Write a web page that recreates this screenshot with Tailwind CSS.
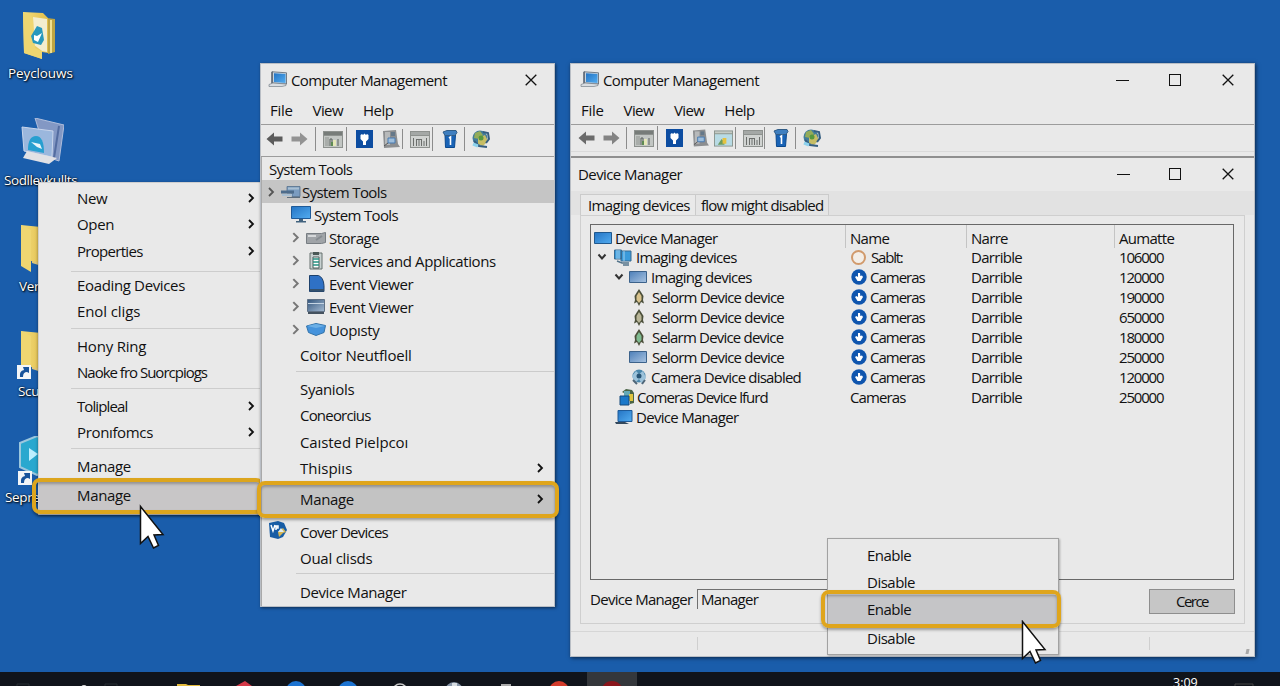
<!DOCTYPE html>
<html lang="en">
<head>
<meta charset="utf-8">
<title>Computer Management</title>
<script src="https://cdn.jsdelivr.net/npm/@tailwindcss/browser@4"></script>
</head>
<body class="relative h-[686px] w-[1280px] overflow-hidden bg-[#1a5dab] font-['Open_Sans','Noto_Sans',sans-serif] text-[15px] leading-5 tracking-[-0.35px] whitespace-nowrap text-[#111]">
<svg class="absolute size-0">
  <defs>
    <linearGradient id="blue" x1="0" y1="0" x2="1" y2="1"><stop offset="0" stop-color="#2474c4"/><stop offset="1" stop-color="#52acf0"/></linearGradient>
    <linearGradient id="steel" x1="0" y1="0" x2="1" y2="1"><stop offset="0" stop-color="#4c7fb9"/><stop offset="1" stop-color="#a9c3e0"/></linearGradient>
    <linearGradient id="slate" x1="0" y1="0" x2="1" y2="1"><stop offset="0" stop-color="#33557c"/><stop offset="1" stop-color="#a4bad2"/></linearGradient>
    <linearGradient id="gold" x1="0" y1="0" x2="1" y2="0"><stop offset="0" stop-color="#f3dc7d"/><stop offset="1" stop-color="#e2bf4c"/></linearGradient>
  </defs>
  <symbol id="chev" viewBox="0 0 8 10"><path d="M2 1l4 4-4 4" fill="none" stroke="currentColor" stroke-width="1.8"/></symbol>
  <symbol id="down" viewBox="0 0 10 8"><path d="M1.500 1.500L5 5.500l3.500-4" fill="none" stroke="#333" stroke-width="2"/></symbol>
  <symbol id="close" viewBox="0 0 12 12"><path d="M.7.7l10.600 10.600M11.300.7L.7 11.300" stroke="#111" stroke-width="1.300"/></symbol>
  <symbol id="cm" viewBox="0 0 20 17"><path d="M3 1l2-1v12l-2 1z" fill="#777f8a"/><path d="M4.500.8l14 1V13l-14-1z" fill="#c8d4df" stroke="#59636f" stroke-width=".8"/><path d="M6 2.300l11.500.8V12L6 11z" fill="url(#blue)"/><path d="M1 13.500l4-1.500 13 1v1.500l-4 1H1z" fill="#d9dde1" stroke="#7a828b" stroke-width=".7"/></symbol>
  <symbol id="arrow" viewBox="0 0 17 14"><path d="M.5 7L8 .5v4h8.500v5H8v4z" fill="currentColor"/></symbol>
  <symbol id="pane" viewBox="0 0 20 17"><path fill="#8d918e" d="M0 0h20v17H0z"/><path fill="#c2c6c3" d="M1 5h18v11H1z"/><path fill="#777c79" d="M1 1h18v3H1z"/><path fill="#a9adaa" d="M2 6h4v9H2z"/><path d="M7 15V8h2v7M15 15V8" stroke="#59605c" fill="none"/><path fill="#e5e7b8" d="M10 9h3v6h-3z"/><path fill="#5e8a54" d="M8 11h2v4H8z"/></symbol>
  <symbol id="barcode" viewBox="0 0 20 17"><path fill="#8d918e" d="M0 0h20v17H0z"/><path fill="#d0d3d1" d="M1 5h18v11H1z"/><path fill="#a4a8a6" d="M1 1h18v3H1z"/><path d="M3.500 7v8M6.500 15V9M9 9v6M11.500 8v7M14 10v5M16.500 7v8M6 8.500h6" stroke="#6b6e6c" fill="none"/></symbol>
  <symbol id="pic" viewBox="0 0 20 17"><path fill="#8b958f" d="M0 0h20v17H0z"/><path fill="#b8dbe4" d="M1 4h18v12H1z"/><path fill="#c5cbc4" d="M1 1h18v2H1z"/><path fill="#6c9b5e" d="M4 15l4-6 3 3v3z"/><path fill="#e6c23f" d="M9 8h4v6H9z"/></symbol>
  <symbol id="helpb" viewBox="0 0 17 18"><path fill="#0d4da1" d="M0 0h17v18H0z"/><path d="M4.500 5l1.500-1 1 1 1.500-1.500L10 5l1-1 1.500 1v4L10 11.500V15H7v-3.500L4.500 9z" fill="#fff"/></symbol>
  <symbol id="tower" viewBox="0 0 18 18"><path fill="#8c8e90" d="M1 1l13-1 2 14 2 3-16 1z"/><path fill="#b7b9ba" d="M3 2h5v13H3z"/><path fill="#657889" d="M9 2h4v4H9z"/><path fill="#9ebedc" stroke="#487ab0" d="M6 8h7v5H6z"/><path d="M2 16l4-3" stroke="#555"/></symbol>
  <symbol id="trash" viewBox="0 0 16 18"><path fill="#1963b6" stroke="#0b498e" d="M3 5h10.500l-1 12.500h-9z"/><path fill="#3f7fc0" stroke="#315d87" d="M1 2l4-1.500h9l1 2-2 3H3z"/><path d="M7 8l1.500-1v8" stroke="#fff" stroke-width="1.600" fill="none"/></symbol>
  <symbol id="globe" viewBox="0 0 18 18"><circle cx="8" cy="8" r="7.500" fill="#427d9b"/><path d="M3 3l5-2 3 4-4 4-5-1z" fill="#94ac59"/><path d="M6 8l7-3 3 6-5 5-5-2z" fill="#c6bd65"/><path d="M11 2l5 1 1 6-3 4M2 11l5 5 8 1" fill="none" stroke="#345d80" stroke-width="2"/><circle cx="9" cy="8" r="2.500" fill="#56983e"/><path d="M1 14l5 2" stroke="#8dd2ed" stroke-width="3"/></symbol>
  <symbol id="drives" viewBox="0 0 20 14"><path d="M6 1.500h13v10H11V8H6z" fill="#7b9cc0" stroke="#56708b" stroke-width=".8"/><path d="M0 5.500h13v3H0z" fill="#4d6c8c"/><path d="M1 9h10v2H1zM7 2.500h11v2H7z" fill="#a9bfd2"/><path d="M6 12h13v1H6z" fill="#5d6c7b"/></symbol>
  <symbol id="monitor" viewBox="0 0 20 17"><path d="M.5.5h19v12H.5z" fill="url(#blue)" stroke="#1e5a98"/><path d="M8 13h4v2h3v1.500H5V15h3z" fill="#41627e"/></symbol>
  <symbol id="storage" viewBox="0 0 20 12"><path d="M.5 1.500h15l4-1v10l-4 1H.5z" fill="#a0a4a8" stroke="#777d82"/><path d="M2 3h8v2H2z" fill="#d5d8da"/><path d="M10 8l6-4" stroke="#858b90" stroke-width="2"/></symbol>
  <symbol id="services" viewBox="0 0 14 18"><path d="M1 1h12v16H1z" fill="#c8d1d1" stroke="#66706f"/><path d="M4 0h6v3H4z" fill="#4a5856"/><path d="M4 5h6v11H4z" fill="#fff" stroke="#4c5d5a"/><path d="M4 7h6M4 10h6M4 13h6" stroke="#269181" stroke-width="1.500"/></symbol>
  <symbol id="event" viewBox="0 0 16 17"><path d="M.5.5h9q5 2 5.500 10v6H.5z" fill="#2f71c5" stroke="#1e416c"/><path d="M1 14h14v2.500H1z" fill="#34516d"/></symbol>
  <symbol id="event2" viewBox="0 0 18 16"><path d="M.5.5h17v12H.5z" fill="url(#slate)" stroke="#617286"/><path d="M1 4h16v1H1z" fill="#c6d5e4"/><path d="M1 13h16v2H1z" fill="#44515e"/></symbol>
  <symbol id="gem" viewBox="0 0 20 13"><path d="M.5 3L10 .5l9.500 2-1.500 7-8 3-7.500-3z" fill="#4593dc" stroke="#3373a9"/><path d="M1 3l9-2 9 2-9 2z" fill="#6bafe6"/></symbol>
  <symbol id="screen" viewBox="0 0 18 12"><path d="M.5.5h17v11H.5z" fill="url(#blue)" stroke="#20588d"/></symbol>
  <symbol id="screen2" viewBox="0 0 18 12"><path d="M.5.5h17v11H.5z" fill="url(#steel)" stroke="#3c628b"/></symbol>
  <symbol id="imaging" viewBox="0 0 18 17"><path d="M.5 1h7v9h-7zM7 2h10v10H7z" fill="#3a9ada" stroke="#396a91"/><path d="M3 1v9M5 1v9M10 2v10" stroke="#9fd0ef"/><path d="M3 12l5 2h7M9 16h6" stroke="#54748b" stroke-width="1.500" fill="none"/></symbol>
  <symbol id="bug" viewBox="0 0 12 17"><path d="M6 0l2 3 2.500 4-.5 4 1 3.500-3-1.500-2 4-2-4-3 1.500L2 11l-.5-4L4 3z" fill="#4b4f3a"/><path d="M6 3l2.500 4v4L6 14l-2.500-3V7z" fill="currentColor"/></symbol>
  <symbol id="cam" viewBox="0 0 16 16"><circle cx="8" cy="7" r="6.500" fill="#4b87ab"/><path d="M1 7l4-5 3 3 4-3 3 7-4 6-3-5-4 4z" fill="#9cc2da"/><circle cx="8" cy="7" r="2.500" fill="#285475"/><path d="M2 11l4 4M14 11l-3 4" stroke="#4f6678" stroke-width="2"/></symbol>
  <symbol id="cams" viewBox="0 0 15 17"><path d="M3 3l4-3 6 1 2 3v10l-4 1V7z" fill="#4a6446"/><path d="M5 2h6v5H5z" fill="#65a9b6"/><path d="M10 5h4v7h-4z" fill="#dfc43e"/><path d="M1 7h9v9H1z" fill="#1b78c9" stroke="#174a7d"/></symbol>
  <symbol id="laptop" viewBox="0 0 18 15"><path d="M3 .5h14v11H3z" fill="url(#blue)" stroke="#1e5a98"/><path d="M0 12h10l4 2H1z" fill="#33485c"/></symbol>
  <symbol id="dl" viewBox="0 0 16 16"><circle cx="8" cy="8" r="7.700" fill="#0f55ae"/><path d="M7 4h2l.3 3L11 6.500 12 8l-2.500 4h-3L4 8l1.500-1L7 8z" fill="#fff"/></symbol>
  <symbol id="cursor" viewBox="0 0 26 44"><path d="M1.500 1.500v37l7.500-7 5.500 11.500 5-2.500-4.500-10.500 9-.5z" fill="#fff" stroke="#111" stroke-width="1.500"/></symbol>
  <symbol id="shortcut" viewBox="0 0 14 14"><path fill="#f3f5f7" d="M0 0h14v14H0z"/><path d="M3 12q-1-6 4-7l-1-3h6v6l-2-1q-4 0-4 5z" fill="#17539b"/></symbol>
  <symbol id="folder" viewBox="0 0 34 48"><path d="M12 5l22 2v33l-9 3-13-4z" fill="#e0c678"/><path d="M1 1l20 2 4 4v32l-14-2z" fill="url(#gold)"/><path d="M1 1l10 5v42L1 42z" fill="#efd671"/></symbol>
</svg>

<!-- desktop icons -->
<svg class="absolute left-[23px] top-[12px] h-[48px] w-[34px]" viewBox="0 0 34 48"><path d="M24 6l8 1v33l-7 2z" fill="#bda443"/><path d="M28 8v33" stroke="#efdf91" stroke-width="2"/><path d="M0 0l20 1 5 5v35l-6-1v7L1 41z" fill="url(#gold)"/><path d="M10 5l14 2v33l-5-1-8-6z" fill="#f3edce"/><path d="M0 0l10 6 2 30 7 3v8L1 41z" fill="#eed671"/><path d="M14 14l5 2 2 12-3 5-8-2-2-7z" fill="#2898bd"/><path d="M11 23l3 1 5-3-4 9-4-2z" fill="#fff"/></svg>
<svg class="absolute left-[21px] top-[118px] h-[47px] w-[43px]" viewBox="0 0 43 47"><path d="M14 0l29 7-5 36-12-4z" fill="#8398c4" stroke="#b0bedc"/><path d="M38 8l-5 32" stroke="#536ca0" stroke-width="2"/><path d="M1 9l31 4-1 26-28-6z" fill="#9bb7dd" stroke="#c9d6ec"/><path d="M7 32q0-14 8-14t8 17z" fill="#279fd0"/><path d="M10 24l9 2 2 5-5-2z" fill="#e8f5fa"/><path d="M6 33l30 7-8 6-26-6z" fill="#e1e1e5"/></svg>
<p class="absolute left-[8px] top-[63px] text-[13.5px] tracking-[-0.1px] text-white [text-shadow:1px_1px_2px_#000,0_0_2px_#000]">Peyclouws</p>
<p class="absolute left-[4px] top-[170px] text-[13.5px] tracking-[-0.4px] text-white [text-shadow:1px_1px_2px_#000,0_0_2px_#000]">Sodlleykullts</p>
<svg class="absolute left-[20px] top-[223px] h-[50px] w-[34px]"><use href="#folder"/></svg>
<p class="absolute left-[19px] top-[276px] text-[13.5px] text-white [text-shadow:1px_1px_2px_#000,0_0_2px_#000]">Verp</p>
<svg class="absolute left-[20px] top-[329px] h-[50px] w-[34px]"><use href="#folder"/></svg>
<svg class="absolute left-[17px] top-[365px] size-[14px]"><use href="#shortcut"/></svg>
<p class="absolute left-[18px] top-[381px] text-[13.5px] text-white [text-shadow:1px_1px_2px_#000,0_0_2px_#000]">Scup</p>
<svg class="absolute left-[19px] top-[436px] h-[40px] w-[36px]" viewBox="0 0 36 40"><path d="M1 7L18 0l17 7v24l-17 8L1 31z" fill="#29a8cf" stroke="#9bc7dd" stroke-width="2"/><path d="M10 12l9 6-9 7z" fill="#bcefff"/></svg>
<svg class="absolute left-[18px] top-[471px] size-[14px]"><use href="#shortcut"/></svg>
<p class="absolute left-[5px] top-[487px] text-[13.5px] text-white [text-shadow:1px_1px_2px_#000,0_0_2px_#000]">Sepre</p>

<!-- desktop context menu -->
<nav class="absolute left-[38px] top-[182px] flex h-[333px] w-[223px] flex-col border-t border-l border-[#cfcfcf] bg-[#e9e9e9] pt-[2px] shadow-[0_1px_3px_#0006]">
  <div class="flex h-[26px] items-center justify-between pr-[6px] pl-[38px]">New<svg class="h-[10px] w-[8px]"><use href="#chev"/></svg></div>
  <div class="flex h-[26px] items-center justify-between pr-[6px] pl-[38px]">Open<svg class="h-[10px] w-[8px]"><use href="#chev"/></svg></div>
  <div class="flex h-[27px] items-center justify-between pr-[6px] pl-[38px] tracking-[-0.7px]">Properties<svg class="h-[10px] w-[8px]"><use href="#chev"/></svg></div>
  <hr class="mt-[7px] ml-[32px] border-[#cdcdcd]">
  <div class="flex h-[26px] items-center pl-[38px]">Eoading Devices</div>
  <div class="flex h-[26px] items-center pl-[38px] tracking-[-0.1px]">Enol cligs</div>
  <hr class="mt-[4px] mb-[4px] ml-[32px] border-[#cdcdcd]">
  <div class="flex h-[26px] items-center pl-[38px] tracking-[-0.2px]">Hony Ring</div>
  <div class="flex h-[26px] items-center pl-[38px] tracking-[-1px]">Naoke fro Suorcpiogs</div>
  <hr class="mt-[3px] mb-[4px] ml-[32px] border-[#cdcdcd]">
  <div class="flex h-[26px] items-center justify-between pr-[6px] pl-[38px] tracking-[-0.9px]">Tolipleal<svg class="h-[10px] w-[8px]"><use href="#chev"/></svg></div>
  <div class="flex h-[26px] items-center justify-between pr-[6px] pl-[38px]">Pronıfomcs<svg class="h-[10px] w-[8px]"><use href="#chev"/></svg></div>
  <hr class="mt-[3px] mb-[4px] ml-[32px] border-[#cdcdcd]">
  <div class="flex h-[26px] items-center pl-[38px]">Manage</div>
  <div class="relative flex h-[34px] items-center bg-[#c8c6c7] pb-[2px] pl-[38px]">Manage
    <span class="absolute -top-px right-[-3px] bottom-[-1px] left-[-7px] rounded-[8px] border-4 border-[#dca51e] shadow-[0_2px_3px_#0006,inset_0_2px_3px_#0004]"></span>
  </div>
</nav>

<!-- narrow management window -->
<section class="absolute left-[260px] top-[63px] flex h-[544px] w-[295px] flex-col border border-[#b9bec5] bg-[#e9e9e9] shadow-[1px_1px_3px_#0008]">
  <header class="flex h-[32px] items-center pr-[17px] pl-[7px]"><svg class="mb-[2px] h-[17px] w-[20px]"><use href="#cm"/></svg><h1 class="ml-[3px] tracking-[-0.6px]">Computer Management</h1><svg class="ml-auto size-[12px]"><use href="#close"/></svg></header>
  <div class="flex h-[29px] items-center gap-[20px] border-b border-[#9c9c9c] pl-[9px]"><span class="tracking-[-0.3px]">File</span><span class="tracking-[-0.6px]">View</span><span class="tracking-[-0.5px]">Help</span></div>
  <div class="flex h-[32px] items-start border-b border-[#9c9c9c] pt-[2px]">
    <div class="flex h-[24px] items-center"><svg class="ml-[5px] h-[14px] w-[17px] text-[#5b5b5b]"><use href="#arrow"/></svg><svg class="ml-[8px] h-[14px] w-[17px] -scale-x-100 text-[#939393]"><use href="#arrow"/></svg>
    <i class="ml-[7px] h-[24px] w-px bg-[#8c8c8c]"></i><svg class="ml-[7px] h-[17px] w-[20px]"><use href="#pane"/></svg><i class="ml-[3px] h-[24px] w-px bg-[#8c8c8c]"></i>
    <svg class="ml-[9px] h-[18px] w-[17px]"><use href="#helpb"/></svg><svg class="ml-[9px] h-[18px] w-[18px]"><use href="#tower"/></svg><i class="ml-[2px] h-[20px] w-px bg-[#8c8c8c]"></i><svg class="ml-[7px] h-[17px] w-[20px]"><use href="#barcode"/></svg><i class="ml-[2px] h-[24px] w-px bg-[#8c8c8c]"></i><svg class="ml-[9px] h-[18px] w-[16px]"><use href="#trash"/></svg><i class="ml-[6px] h-[24px] w-px bg-[#8c8c8c]"></i><svg class="ml-[7px] h-[18px] w-[18px]"><use href="#globe"/></svg></div>
  </div>
  <div class="flex flex-1 flex-col border-l border-[#a9a9a9] tracking-[-0.5px]">
    <div class="flex h-[23px] items-center pl-[7px] tracking-[-0.7px]">System Tools</div>
    <div class="flex h-[23px] items-center bg-[#c5c5c5] pl-[5px]"><svg class="h-[10px] w-[8px] text-[#555]"><use href="#chev"/></svg><svg class="ml-[6px] h-[14px] w-[20px]"><use href="#drives"/></svg><span class="ml-px tracking-[-0.6px]">System Tools</span></div>
    <div class="flex h-[23px] items-center pl-[29px]"><svg class="h-[17px] w-[20px]"><use href="#monitor"/></svg><span class="ml-[3px] tracking-[-0.65px]">System Tools</span></div>
    <div class="flex h-[23px] items-center pl-[29px]"><svg class="h-[11px] w-[9px] text-[#777]"><use href="#chev"/></svg><svg class="ml-[6px] h-[12px] w-[20px]"><use href="#storage"/></svg><span class="ml-[3px]">Storage</span></div>
    <div class="flex h-[23px] items-center pl-[29px]"><svg class="h-[11px] w-[9px] text-[#777]"><use href="#chev"/></svg><svg class="ml-[9px] h-[18px] w-[14px]"><use href="#services"/></svg><span class="ml-[6px] tracking-[-0.4px]">Services and Applications</span></div>
    <div class="flex h-[23px] items-center pl-[29px]"><svg class="h-[11px] w-[9px] text-[#777]"><use href="#chev"/></svg><svg class="ml-[9px] h-[17px] w-[16px]"><use href="#event"/></svg><span class="ml-[4px]">Event Viewer</span></div>
    <div class="flex h-[23px] items-center pl-[29px]"><svg class="h-[11px] w-[9px] text-[#777]"><use href="#chev"/></svg><svg class="ml-[7px] h-[16px] w-[18px]"><use href="#event2"/></svg><span class="ml-[4px]">Event Viewer</span></div>
    <div class="flex h-[23px] items-center pl-[29px]"><svg class="h-[11px] w-[9px] text-[#777]"><use href="#chev"/></svg><svg class="ml-[6px] h-[13px] w-[20px]"><use href="#gem"/></svg><span class="ml-[3px] tracking-[-0.35px]">Uopısty</span></div>
    <div class="flex h-[27px] items-center pl-[38px] tracking-[-0.18px]">Coitor Neutfloell</div>
    <hr class="mt-[3px] mb-[4px] ml-[34px] border-[#cbcbcb]">
    <div class="flex h-[26px] items-center pl-[38px] tracking-[-0.35px]">Syaniols</div>
    <div class="flex h-[26px] items-center pl-[38px] tracking-[-0.8px]">Coneorcius</div>
    <div class="flex h-[27px] items-center pl-[38px] tracking-[-0.1px]">Caısted Pielpcoı</div>
    <div class="flex h-[26px] items-center justify-between pr-[10px] pl-[38px] tracking-[0px]">Thispiıs<svg class="h-[10px] w-[8px]"><use href="#chev"/></svg></div>
    <div class="relative mt-[2px] flex h-[33px] items-center justify-between bg-[#c3c3c3] pr-[10px] pb-[2px] pl-[38px] tracking-[-0.35px]">Manage<svg class="h-[10px] w-[8px]"><use href="#chev"/></svg>
      <span class="absolute -top-[2px] right-[-5px] bottom-[-2px] left-[-5px] rounded-[8px] border-4 border-[#dfa51c] shadow-[0_2px_3px_#0005,inset_0_2px_3px_#0004]"></span></div>
    <div class="mt-[2px] flex h-[28px] items-center pl-[7px]"><svg class="mb-[4px] h-[18px] w-[18px]" viewBox="0 0 18 18"><path d="M0 2l9-2 6 2 3 7-4 7-5 2-8-2z" fill="#185da5"/><path d="M2 4l2 6 2-6M7 9V5h2v2H7" stroke="#fff" stroke-width="1.500" fill="none"/><path d="M9 11l5-4 3 4-3 1-4 4z" fill="#d7b653"/><path d="M9 11l3-4 3 4z" fill="#dcecf5"/></svg><span class="ml-[13px] tracking-[-0.75px]">Cover Devices</span></div>
    <div class="flex h-[24px] items-center pl-[38px] tracking-[-0.25px]">Oual clisds</div>
    <hr class="mt-[3px] mb-[5px] ml-[34px] border-[#cbcbcb]">
    <div class="flex h-[26px] items-center pl-[38px] tracking-[-0.4px]">Device Manager</div>
  </div>
</section>

<!-- wide management window -->
<section class="absolute left-[570px] top-[63px] flex h-[594px] w-[685px] flex-col border border-[#b9bec5] bg-[#e9e9e9] shadow-[1px_1px_4px_#0009]">
  <header class="flex h-[32px] items-center pr-[20px] pl-[9px]"><svg class="mb-[2px] h-[17px] w-[20px]"><use href="#cm"/></svg><h1 class="ml-[3px] tracking-[-0.6px]">Computer Management</h1><i class="ml-auto h-px w-[13px] bg-[#111]"></i><i class="ml-[40px] size-[12px] border border-[#111]"></i><svg class="ml-[41px] size-[12px]"><use href="#close"/></svg></header>
  <div class="flex h-[29px] items-center gap-[20px] border-b border-[#9c9c9c] pl-[10px]"><span class="tracking-[-0.3px]">File</span><span class="tracking-[-0.6px]">View</span><span class="tracking-[-0.6px]">View</span><span class="tracking-[-0.5px]">Help</span></div>
  <div class="flex h-[33px] items-start border-b-2 border-[#8f8f8f]">
    <div class="flex h-[27px] w-full items-center border-b border-[#dadada]"><svg class="ml-[7px] h-[14px] w-[17px] text-[#6b6b6b]"><use href="#arrow"/></svg><svg class="ml-[8px] h-[14px] w-[17px] -scale-x-100 text-[#838383]"><use href="#arrow"/></svg>
    <i class="ml-[6px] h-[22px] w-px bg-[#8c8c8c]"></i><svg class="ml-[7px] h-[17px] w-[20px]"><use href="#pane"/></svg><i class="ml-[3px] h-[24px] w-px bg-[#8c8c8c]"></i>
    <svg class="ml-[8px] h-[18px] w-[17px]"><use href="#helpb"/></svg><svg class="ml-[9px] h-[18px] w-[17px]"><use href="#tower"/></svg><svg class="ml-[5px] h-[17px] w-[19px]"><use href="#pic"/></svg><i class="ml-[2px] h-[22px] w-px bg-[#8c8c8c]"></i><svg class="ml-[7px] h-[17px] w-[20px]"><use href="#barcode"/></svg><i class="ml-px h-[22px] w-px bg-[#8c8c8c]"></i><svg class="ml-[8px] h-[18px] w-[16px]"><use href="#trash"/></svg><i class="ml-[6px] h-[22px] w-px bg-[#8c8c8c]"></i><svg class="ml-[7px] h-[18px] w-[18px]"><use href="#globe"/></svg></div>
  </div>
  <header class="flex h-[33px] items-center pr-[20px] pb-px pl-[7px]"><h2 class="tracking-[-0.58px]">Device Manager</h2><i class="ml-auto h-px w-[13px] bg-[#111]"></i><i class="ml-[39px] size-[12px] border border-[#111]"></i><svg class="ml-[41px] size-[12px]"><use href="#close"/></svg></header>
  <div class="flex h-[24px] items-end bg-[#e2e2e2] pl-[9px]"><div class="flex h-[21px] w-[115px] items-center border-t border-l border-[#cbcbcb] bg-[#e9e9e9] pb-px pl-[7px]"><span class="tracking-[-0.63px]">Imaging devices</span></div><div class="flex h-[21px] w-[134px] items-center border border-b-0 border-[#cbcbcb] bg-[#e5e5e5] pb-px pl-[5px]"><span class="tracking-[-0.75px]">flow might disabled</span></div></div>
  <div class="mx-[9px] flex h-[409px] flex-col border border-[#cfcfcf] px-[9px] pt-[8px] tracking-[-0.7px]">
    <div class="h-[356px] w-[644px] border border-[#686868]">
      <div class="grid h-[23px] grid-cols-[254px_121px_148px_1fr] [&>div]:flex [&>div]:items-center [&>div]:pt-[2px]">
        <div class="pl-[3px]"><svg class="h-[12px] w-[18px]"><use href="#screen"/></svg><span class="ml-[3px]">Device Manager</span></div><div class="border-l border-[#c4c4c4] pl-[4px]">Name</div><div class="border-l border-[#c4c4c4] pl-[4px]">Narre</div><div class="border-l border-[#c4c4c4] pl-[4px]">Aumatte</div>
      </div>
      <div class="-mt-px grid auto-rows-[20px] grid-cols-[254px_126px_148px_1fr] [&>div]:flex [&>div]:items-center">
        <div class="pl-[6px]"><svg class="h-[8px] w-[10px]"><use href="#down"/></svg><svg class="ml-[7px] h-[17px] w-[18px]"><use href="#imaging"/></svg><span class="ml-[4px]">Imaging devices</span></div>
        <div class="pl-[6px]"><i class="size-[15px] rounded-full border-2 border-[#d19a6c] bg-[#f3eee8]"></i><span class="ml-[5px] tracking-[-1.2px]">Sablt:</span></div><div>Darrible</div><div class="tracking-[-1.200px]">106000</div>
        <div class="pl-[23px]"><svg class="h-[8px] w-[10px]"><use href="#down"/></svg><svg class="ml-[5px] h-[12px] w-[18px]"><use href="#screen2"/></svg><span class="ml-[4px]">Imaging devices</span></div>
        <div class="pl-[6px]"><svg class="size-[16px]"><use href="#dl"/></svg><span class="ml-[3px] tracking-[-1px]">Cameras</span></div><div>Darrible</div><div class="tracking-[-1.200px]">120000</div>
        <div class="pl-[42px]"><svg class="h-[17px] w-[12px] text-[#d9c38d]"><use href="#bug"/></svg><span class="ml-[7px] tracking-[-0.8px]">Selorm Device device</span></div>
        <div class="pl-[6px]"><svg class="size-[16px]"><use href="#dl"/></svg><span class="ml-[3px] tracking-[-1px]">Cameras</span></div><div>Darrible</div><div class="tracking-[-1.200px]">190000</div>
        <div class="pl-[42px]"><svg class="h-[17px] w-[12px] text-[#b9b698]"><use href="#bug"/></svg><span class="ml-[7px] tracking-[-0.8px]">Selorm Device device</span></div>
        <div class="pl-[6px]"><svg class="size-[16px]"><use href="#dl"/></svg><span class="ml-[3px] tracking-[-1px]">Cameras</span></div><div>Darrible</div><div class="tracking-[-1.200px]">650000</div>
        <div class="pl-[42px]"><svg class="h-[17px] w-[12px] text-[#80bc91]"><use href="#bug"/></svg><span class="ml-[7px] tracking-[-0.8px]">Selarm Device device</span></div>
        <div class="pl-[6px]"><svg class="size-[16px]"><use href="#dl"/></svg><span class="ml-[3px] tracking-[-1px]">Cameras</span></div><div>Darrible</div><div class="tracking-[-1.200px]">180000</div>
        <div class="pl-[38px]"><svg class="h-[12px] w-[18px]"><use href="#screen2"/></svg><span class="ml-[5px] tracking-[-0.8px]">Selorm Device device</span></div>
        <div class="pl-[6px]"><svg class="size-[16px]"><use href="#dl"/></svg><span class="ml-[3px] tracking-[-1px]">Cameras</span></div><div>Darrible</div><div class="tracking-[-1.200px]">250000</div>
        <div class="pl-[40px]"><svg class="h-[16px] w-[16px]"><use href="#cam"/></svg><span class="ml-[4px] tracking-[-0.8px]">Camera Device disabled</span></div>
        <div class="pl-[6px]"><svg class="size-[16px]"><use href="#dl"/></svg><span class="ml-[3px] tracking-[-1px]">Cameras</span></div><div>Darrible</div><div class="tracking-[-1.200px]">120000</div>
        <div class="pl-[28px]"><svg class="h-[17px] w-[15px]"><use href="#cams"/></svg><span class="ml-[3px] tracking-[-0.95px]">Comeras Device lfurd</span></div>
        <div class="pl-[5px] tracking-[-0.9px]">Cameras</div><div>Darrible</div><div class="tracking-[-1.200px]">250000</div>
        <div class="pl-[24px]"><svg class="h-[15px] w-[18px]"><use href="#laptop"/></svg><span class="ml-[3px]">Device Manager</span></div>
      </div>
    </div>
    <div class="mt-[9px] flex items-start"><span class="w-[107px]">Device Manager</span><div class="h-[20px] w-[140px] border-t border-l border-[#707070] pl-[3px] leading-[18px]">Manager</div><button class="ml-auto h-[25px] w-[86px] border border-[#8e8e8e] bg-[#c6c6c6] pb-[2px] tracking-[-1.5px]">Cerce</button></div>
  </div>
  <footer class="mt-[7px] flex flex-1 border-t border-[#d6d6d6] pt-[5px]"><i class="ml-[126px] h-[13px] w-px bg-[#cfcfcf]"></i><i class="ml-[451px] h-[13px] w-px bg-[#cfcfcf]"></i><i class="mt-[12px] mr-[5px] ml-auto h-[5px] w-[3px] -skew-x-12 bg-[#a8a8a8]"></i></footer>
</section>

<!-- device context menu -->
<nav class="absolute left-[827px] top-[538px] flex h-[117px] w-[232px] flex-col border border-[#a2a2a2] bg-[#e9e9e9] pt-[3px] tracking-[-0.5px] shadow-[1px_1px_2px_#0004]">
  <div class="flex h-[26px] items-center pl-[39px]">Enable</div>
  <div class="flex h-[27px] items-center pl-[39px]">Disable</div>
  <div class="relative flex h-[30px] items-center bg-[#c5c5c7] pb-[2px] pl-[39px]">Enable<span class="absolute -top-[5px] right-[-3px] bottom-[-3px] left-[-7px] rounded-[8px] border-4 border-[#dfa51c] shadow-[0_2px_3px_#0005,inset_0_2px_3px_#0004]"></span></div>
  <div class="flex h-[26px] items-center pl-[39px]">Disable</div>
</nav>
<svg class="absolute left-[139px] top-[504px] h-[46px] w-[26px]"><use href="#cursor"/></svg>
<svg class="absolute left-[1021px] top-[620px] h-[44px] w-[26px]"><use href="#cursor"/></svg>

<!-- taskbar -->
<footer class="absolute top-[672px] left-0 h-[14px] w-[1280px] overflow-hidden bg-[#10141b]">
  <svg class="h-[14px] w-[1280px]" viewBox="0 0 1280 14"><path d="M587 0h50v14h-50z" fill="#34373b"/><path d="M17 14v-2h12v2M105 14v-2h12v2" stroke="#262c33" fill="none"/><circle cx="84" cy="16" r="3" fill="#ddd"/><path d="M177 12h9l2 1h12v3h-23z" fill="#e4bb3b"/><path d="M236 14l9-5 7 5z" fill="#d43948"/><circle cx="296" cy="19" r="10" fill="#1c73d1"/><circle cx="348" cy="19" r="10" fill="#1c73d1"/><circle cx="400" cy="19" r="7" fill="none" stroke="#ccc" stroke-width="1.500"/><circle cx="454" cy="19" r="9" fill="#8795a7"/><path d="M452 11h5v3h-5z" fill="#d6dce1"/><path d="M501 12h10v4h-10z" fill="#aaa"/><circle cx="559" cy="19" r="10" fill="#d33b2b"/><circle cx="612" cy="20" r="11" fill="#8a151b"/><path d="M1235 14v-2h18v2" stroke="#444" fill="none"/></svg>
  <span class="absolute top-[4px] left-[1173px] text-[12.5px] leading-[14px] tracking-[0px] text-white">3:09</span>
</footer>
</body>
</html>
